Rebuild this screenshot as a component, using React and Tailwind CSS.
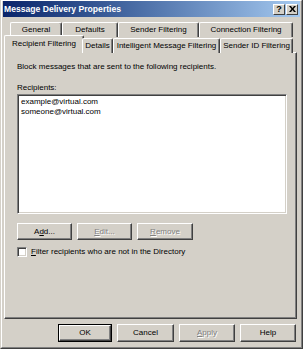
import React from "react";

function Btn({ children, className = "", disabled = false, def = false }) {
  const inner = (
    <div
      className={`flex h-full w-full items-center justify-center border border-t-white border-l-white border-r-[#404040] border-b-[#404040] bg-[#d4d0c8] shadow-[inset_-1px_-1px_0_#808080] ${
        disabled ? "text-[#808080] [text-shadow:1px_1px_0_#ffffff]" : "text-black"
      }`}
    >
      {children}
    </div>
  );
  if (def) {
    return <div className={`border border-black ${className}`}>{inner}</div>;
  }
  return <div className={className}>{inner}</div>;
}

function Tab({ children, className = "" }) {
  return (
    <div
      className={`flex items-center justify-center rounded-t-[2px] border-t border-l border-r border-t-white border-l-white border-r-[#404040] bg-[#d4d0c8] shadow-[inset_-1px_0_0_#808080] ${className}`}
    >
      {children}
    </div>
  );
}

export default function App() {
  return (
    <div className="h-[349px] w-[303px] overflow-hidden bg-[#d4d0c8] font-['Liberation_Sans',Arial,sans-serif] text-[8px] leading-none text-black">
      <div className="flex h-full w-full flex-col border-l border-r border-b border-l-[#d4d0c8] border-r-[#404040] border-b-[#404040]">
        <div className="flex h-full w-full flex-col border border-t-white border-l-white border-r-[#808080] border-b-[#808080] px-[1px]">
          {/* Title bar */}
          <div className="flex h-[16px] shrink-0 items-center justify-between bg-gradient-to-r from-[#0a246a] to-[#a6caf0] pl-[1px] pr-[2px]">
            <span className="text-[8.6px] font-bold text-white">Message Delivery Properties</span>
            <div className="flex gap-[1px]">
              <div className="flex h-[11px] w-[12px] items-center justify-center border border-t-white border-l-white border-r-[#404040] border-b-[#404040] bg-[#d4d0c8] text-[9px] font-bold leading-none text-black">
                ?
              </div>
              <div className="flex h-[11px] w-[12px] items-center justify-center border border-t-white border-l-white border-r-[#404040] border-b-[#404040] bg-[#d4d0c8]">
                <svg width="7" height="6" viewBox="0 0 7 6">
                  <path d="M0 0h2l1.5 2L5 0h2L4.5 3 7 6H5L3.5 4 2 6H0l2.5-3z" fill="#000" />
                </svg>
              </div>
            </div>
          </div>

          {/* Tabs */}
          <div className="mt-[5px] flex shrink-0 flex-col">
            <div className="flex h-[15px] pl-[7px]">
              <Tab className="w-[52px]">General</Tab>
              <Tab className="w-[56px]">Defaults</Tab>
              <Tab className="w-[81px]">Sender Filtering</Tab>
              <Tab className="w-[94px]">Connection Filtering</Tab>
            </div>
            <div className="relative z-10 -mb-[1px] flex h-[16px] items-end pl-[1px]">
              <Tab className="-mr-[2px] h-[18px] w-[80px] pb-[2px]">Recipient Filtering</Tab>
              <Tab className="h-[15px] w-[31px]">Details</Tab>
              <Tab className="h-[15px] w-[107px]">Intelligent Message Filtering</Tab>
              <Tab className="h-[15px] w-[73px]">Sender ID Filtering</Tab>
            </div>
          </div>

          {/* Panel */}
          <div className="ml-[1px] mr-[3px] flex h-[267px] shrink-0 flex-col border border-t-white border-l-white border-r-[#404040] border-b-[#404040] shadow-[inset_-1px_-1px_0_#808080] pl-[12px] pr-[9px]">
            <div className="mt-[10px]">Block messages that are sent to the following recipients.</div>
            <div className="mt-[13px]">Recipients:</div>
            <div className="mt-[2px] flex h-[120px] flex-col border border-t-[#808080] border-l-[#808080] border-r-white border-b-white bg-white shadow-[inset_1px_1px_0_#404040,inset_-1px_-1px_0_#d4d0c8] pl-[3px] pt-[2px]">
              <div className="h-[10px] leading-[10px]">example@virtual.com</div>
              <div className="h-[10px] leading-[10px]">someone@virtual.com</div>
            </div>
            <div className="mt-[9px] flex gap-[5px]">
              <Btn className="h-[17px] w-[55px]">
                <span>
                  A<span className="underline">d</span>d...
                </span>
              </Btn>
              <Btn disabled className="h-[17px] w-[55px]">
                <span>
                  <span className="underline">E</span>dit...
                </span>
              </Btn>
              <Btn disabled className="h-[17px] w-[56px]">
                <span>
                  <span className="underline">R</span>emove
                </span>
              </Btn>
            </div>
            <div className="mt-[7px] flex items-center gap-[4px]">
              <div className="h-[10px] w-[10px] border border-t-[#808080] border-l-[#808080] border-r-white border-b-white bg-white shadow-[inset_1px_1px_0_#404040,inset_-1px_-1px_0_#d4d0c8]" />
              <span>
                <span className="underline">F</span>ilter recipients who are not in the Directory
              </span>
            </div>
          </div>

          {/* Bottom buttons */}
          <div className="mt-[5px] flex gap-[5px] pl-[55px]">
            <Btn def className="h-[18px] w-[54px]">OK</Btn>
            <Btn className="h-[18px] w-[57px]">Cancel</Btn>
            <Btn disabled className="h-[18px] w-[56px]">
              <span>
                <span className="underline">A</span>pply
              </span>
            </Btn>
            <Btn className="h-[18px] w-[56px]">Help</Btn>
          </div>
        </div>
      </div>
    </div>
  );
}
